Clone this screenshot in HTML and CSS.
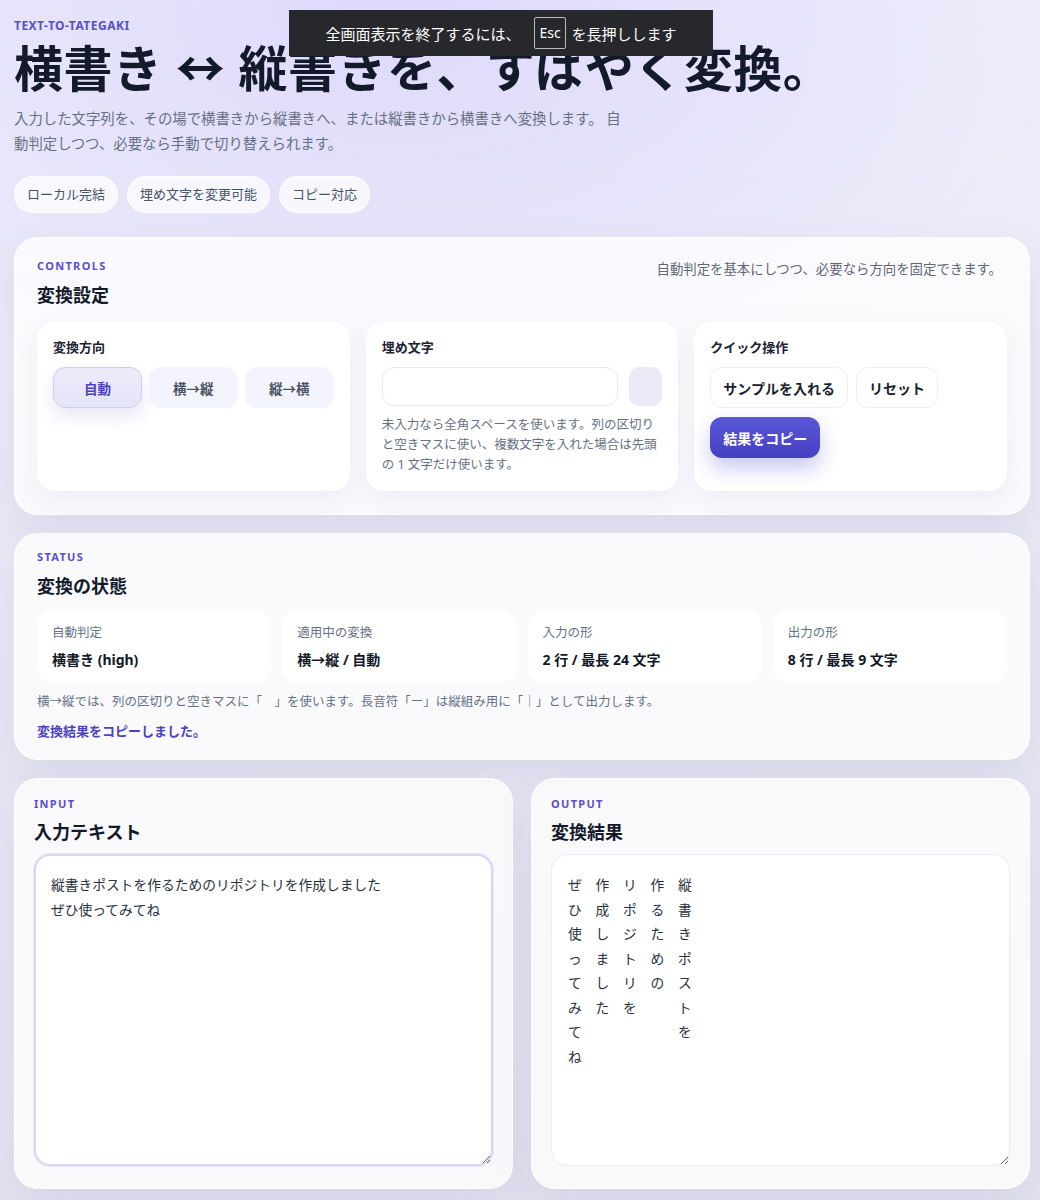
FILE: index.html
```html
<!DOCTYPE html>
<html lang="ja">
<head>
    <meta charset="UTF-8">
    <meta name="viewport" content="width=device-width, initial-scale=1.0">
    <title>Text to Tategaki</title>
    <link rel="stylesheet" href="styles.css">
</head>
<body>
    <div class="fs-notice">全画面表示を終了するには、<span class="key">Esc</span>を長押しします</div>
    <main class="page">
        <header class="hero">
            <p class="hero-eyebrow">TEXT-TO-TATEGAKI</p>
            <h1>横書き ↔ 縦書きを、すばやく変換。</h1>
            <p class="lead">入力した文字列を、その場で横書きから縦書きへ、または縦書きから横書きへ変換します。 自動判定しつつ、必要なら手動で切り替えられます。</p>
            <div class="pills">
                <span class="pill">ローカル完結</span>
                <span class="pill">埋め文字を変更可能</span>
                <span class="pill">コピー対応</span>
            </div>
        </header>

        <section class="panel controls">
            <div class="panel-head">
                <div>
                    <p class="eyebrow">CONTROLS</p>
                    <h2>変換設定</h2>
                </div>
                <p class="panel-note">自動判定を基本にしつつ、必要なら方向を固定できます。</p>
            </div>
            <div class="control-grid">
                <div class="control-card">
                    <p class="control-label">変換方向</p>
                    <div class="mode-group">
                        <button class="mode active">自動</button>
                        <button class="mode">横→縦</button>
                        <button class="mode">縦→横</button>
                    </div>
                </div>
                <div class="control-card">
                    <p class="control-label">埋め文字</p>
                    <div class="filler-row">
                        <input type="text" class="filler-input">
                        <span class="filler-preview"></span>
                    </div>
                    <p class="help">未入力なら全角スペースを使います。列の区切りと空きマスに使い、複数文字を入れた場合は先頭の 1 文字だけ使います。</p>
                </div>
                <div class="control-card">
                    <p class="control-label">クイック操作</p>
                    <div class="actions">
                        <button class="action">サンプルを入れる</button>
                        <button class="action">リセット</button>
                        <button class="action primary">結果をコピー</button>
                    </div>
                </div>
            </div>
        </section>

        <section class="panel status">
            <p class="eyebrow">STATUS</p>
            <h2>変換の状態</h2>
            <div class="stats">
                <div class="stat">
                    <p class="stat-label">自動判定</p>
                    <p class="stat-value">横書き (high)</p>
                </div>
                <div class="stat">
                    <p class="stat-label">適用中の変換</p>
                    <p class="stat-value">横→縦 / 自動</p>
                </div>
                <div class="stat">
                    <p class="stat-label">入力の形</p>
                    <p class="stat-value">2 行 / 最長 24 文字</p>
                </div>
                <div class="stat">
                    <p class="stat-label">出力の形</p>
                    <p class="stat-value">8 行 / 最長 9 文字</p>
                </div>
            </div>
            <p class="status-note">横→縦では、列の区切りと空きマスに「　」を使います。長音符「ー」は縦組み用に「｜」として出力します。</p>
            <p class="status-msg">変換結果をコピーしました。</p>
        </section>

        <div class="io-grid">
            <section class="panel io">
                <p class="eyebrow">INPUT</p>
                <h2>入力テキスト</h2>
                <textarea class="text-box input-box">縦書きポストを作るためのリポジトリを作成しました
ぜひ使ってみてね</textarea>
            </section>
            <section class="panel io">
                <p class="eyebrow">OUTPUT</p>
                <h2>変換結果</h2>
                <textarea class="text-box output-box" readonly>ぜ　作　リ　作　縦
ひ　成　ポ　る　書
使　し　ジ　た　き
っ　ま　ト　め　ポ
て　し　リ　の　ス
み　た　を　　　ト
て　　　　　　　を
ね　　　　　　　　</textarea>
            </section>
        </div>
    </main>
</body>
</html>
```

FILE: styles.css
```css
* {
    box-sizing: border-box;
}
body {
    margin: 0;
    font-family: "Noto Sans", "Noto Sans CJK JP", sans-serif;
    color: #141a2b;
    min-height: 1200px;
    background:
        radial-gradient(ellipse 700px 420px at 38% 0%, rgba(220, 214, 252, 0.9), rgba(220, 214, 252, 0) 100%),
        linear-gradient(180deg, #eeeefa 0%, #e8e8f4 50%, #e3e3ef 100%);
}
p, h1, h2 {
    margin: 0;
}
button, input, textarea {
    font-family: inherit;
}
.page {
    padding: 18px 10px 10px 14px;
}

/* fullscreen notice */
.fs-notice {
    position: absolute;
    left: 289px;
    top: 10px;
    width: 424px;
    height: 46px;
    background: #26282c;
    color: #fff;
    font-size: 15px;
    display: flex;
    align-items: center;
    justify-content: center;
    z-index: 10;
}
.key {
    display: inline-block;
    border: 1px solid #b9bbc0;
    border-radius: 2px;
    padding: 4px 4px;
    margin: 0 6px 0 14px;
    font-size: 14px;
    line-height: 22px;
}

/* hero */
.hero-eyebrow {
    font-size: 12px;
    line-height: 16px;
    font-weight: 700;
    letter-spacing: 0.04em;
    color: #5750cc;
}
.hero h1 {
    margin-top: 6px;
    font-size: 49px;
    line-height: 56px;
    font-weight: 700;
    letter-spacing: 0.01em;
    color: #131a29;
}
.lead {
    margin-top: 10px;
    max-width: 620px;
    font-size: 14.4px;
    line-height: 25px;
    color: #667085;
}
.pills {
    display: flex;
    gap: 9px;
    margin-top: 20px;
}
.pill {
    padding: 8px 12px;
    font-size: 13px;
    line-height: 19px;
    color: #475467;
    background: rgba(255, 255, 255, 0.72);
    border: 1px solid rgba(255, 255, 255, 0.9);
    border-radius: 999px;
}

/* panels */
.panel {
    background: rgba(255, 255, 255, 0.78);
    border: 1px solid rgba(255, 255, 255, 0.9);
    border-radius: 24px;
    box-shadow: 0 18px 40px rgba(90, 90, 160, 0.1);
}
.eyebrow {
    font-size: 11px;
    line-height: 16px;
    font-weight: 700;
    letter-spacing: 0.12em;
    color: #5750cc;
}
.panel h2 {
    margin-top: 8px;
    font-size: 18px;
    line-height: 26px;
    font-weight: 700;
    color: #141a2b;
}
.controls {
    margin-top: 24px;
    padding: 20px 22px 23px 22px;
}
.panel-head {
    display: flex;
    justify-content: space-between;
    align-items: flex-start;
}
.panel-note {
    font-size: 13.4px;
    line-height: 20px;
    color: #5f6675;
    margin-top: 1px;
    margin-right: 5px;
}
.control-grid {
    display: grid;
    grid-template-columns: repeat(3, 1fr);
    gap: 16px;
    margin-top: 14px;
}
.control-card {
    background: #fff;
    border-radius: 18px;
    padding: 16px;
    box-shadow: 0 8px 24px rgba(80, 80, 150, 0.08);
}
.control-label {
    font-size: 13px;
    line-height: 18px;
    font-weight: 700;
    color: #1d2333;
}
.mode-group {
    display: grid;
    grid-template-columns: repeat(3, 1fr);
    gap: 7px;
    margin-top: 11px;
}
.mode {
    height: 41px;
    border: 1px solid transparent;
    border-radius: 12px;
    background: #f3f4fd;
    color: #4b5263;
    font-size: 13.5px;
    font-weight: 700;
}
.mode.active {
    background: linear-gradient(180deg, #ecebfb, #e6e5f8);
    border-color: #cfcdef;
    color: #4a43bd;
    box-shadow: 0 8px 18px rgba(90, 80, 200, 0.14);
}
.filler-row {
    display: flex;
    gap: 11px;
    margin-top: 11px;
}
.filler-input {
    flex: 1;
    height: 39px;
    border: 1px solid #e8e9f1;
    border-radius: 12px;
    background: #fff;
}
.filler-preview {
    width: 33px;
    height: 39px;
    border-radius: 10px;
    background: #ebebf8;
}
.help {
    margin-top: 9px;
    font-size: 12.5px;
    line-height: 20px;
    color: #667085;
}
.actions {
    display: flex;
    flex-wrap: wrap;
    gap: 9px 8px;
    margin-top: 11px;
}
.action {
    height: 41px;
    padding: 0 12px;
    border: 1px solid #eef0f5;
    border-radius: 12px;
    background: #fff;
    color: #1a1f2e;
    font-size: 14px;
    font-weight: 700;
}
.action.primary {
    border: none;
    padding: 0 13px;
    background: linear-gradient(180deg, #5a58d8, #4540c2);
    color: #fff;
    box-shadow: 0 10px 20px rgba(79, 70, 210, 0.3);
}

/* status */
.status {
    margin-top: 18px;
    padding: 15px 22px 19px 22px;
}
.stats {
    display: grid;
    grid-template-columns: repeat(4, 1fr);
    gap: 11px;
    margin-top: 11px;
}
.stat {
    background: rgba(255, 255, 255, 0.9);
    border-radius: 16px;
    padding: 14px 15px 13px;
}
.stat-label {
    font-size: 12.5px;
    line-height: 18px;
    color: #667085;
}
.stat-value {
    margin-top: 8px;
    font-size: 14px;
    line-height: 20px;
    font-weight: 700;
    color: #111827;
}
.status-note {
    margin-top: 10px;
    font-size: 12.5px;
    line-height: 18px;
    color: #667085;
}
.status-msg {
    margin-top: 11px;
    font-size: 13px;
    line-height: 18px;
    font-weight: 700;
    color: #4a43bd;
}

/* input / output */
.io-grid {
    display: grid;
    grid-template-columns: 1fr 1fr;
    gap: 18px;
    margin-top: 18px;
}
.io {
    padding: 17px 19px 22px 19px;
}
.io h2 {
    margin-top: 7px;
}
.text-box {
    display: block;
    width: 100%;
    height: 312px;
    margin-top: 9px;
    padding: 16px 15px;
    border-radius: 16px;
    background: #fff;
    color: #2a2f3b;
    font-family: "Noto Sans CJK JP", sans-serif;
    font-size: 13.75px;
    line-height: 24.5px;
    outline: none;
}
.input-box {
    border: 2px solid #d8d6f3;
    box-shadow: 0 0 0 1px rgba(200, 196, 240, 0.35);
}
.output-box {
    border: 1px solid #ebebf4;
    padding: 17px 16px;
}
```
